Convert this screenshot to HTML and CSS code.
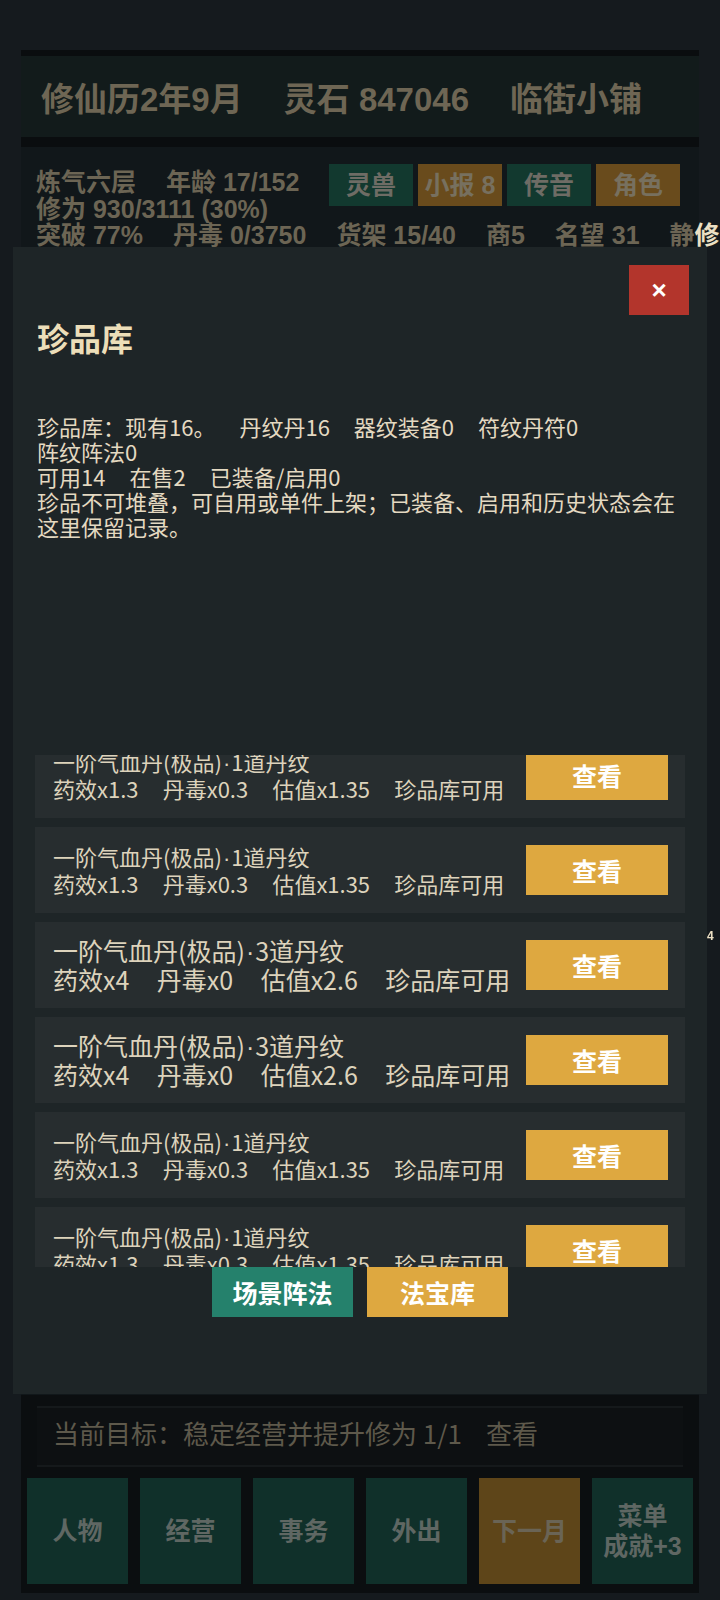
FILE: index.html
```html
<!DOCTYPE html>
<html lang="zh">
<head>
<meta charset="utf-8">
<title>珍品库</title>
<link rel="stylesheet" href="styles.css">
</head>
<body>
<div class="app">
  <header class="topbar">
    <span>修仙历2年9月</span>
    <span>灵石 847046</span>
    <span>临街小铺</span>
  </header>
  <section class="stats">
    <div class="stats-top">
      <div class="stats-lines">
        <div class="row"><span class="it">炼气六层</span><span>年龄 17/152</span></div>
        <div class="row">修为 930/3111 (30%)</div>
      </div>
      <div class="tabs">
        <button class="tab teal">灵兽</button>
        <button class="tab brown">小报 8</button>
        <button class="tab teal">传音</button>
        <button class="tab brown">角色</button>
      </div>
    </div>
    <div class="row nowrap"><span class="it">突破 77%</span><span class="it">丹毒 0/3750</span><span class="it">货架 15/40</span><span class="it">商5</span><span class="it">名望 31</span><span>静<span class="bright">修</span></span></div>
  </section>
  <footer class="bottom">
    <div class="goal"><span>当前目标：稳定经营并提升修为 1/1</span><span class="goal-link">查看</span></div>
    <nav class="nav">
      <button class="navbtn teal">人物</button>
      <button class="navbtn teal">经营</button>
      <button class="navbtn teal">事务</button>
      <button class="navbtn teal">外出</button>
      <button class="navbtn brown">下一月</button>
      <button class="navbtn teal">菜单<br>成就+3</button>
    </nav>
  </footer>
</div>

<div class="overlay">
  <div class="modal">
    <div class="modal-head"><button class="close">×</button></div>
    <h2 class="title">珍品库</h2>
    <div class="info">
      <div><span class="it">珍品库：现有16。</span><span class="it">丹纹丹16</span><span class="it">器纹装备0</span><span class="it">符纹丹符0</span><span class="it">阵纹阵法0</span></div>
      <div><span class="it">可用14</span><span class="it">在售2</span><span>已装备/启用0</span></div>
      <div>珍品不可堆叠，可自用或单件上架；已装备、启用和历史状态会在这里保留记录。</div>
    </div>
    <div class="list">
      <div class="list-inner">
        <div class="card">
          <div class="card-text"><div>一阶气血丹(极品)<span class="dot">·</span>1道丹纹</div><div><span class="it">药效x1.3</span><span class="it">丹毒x0.3</span><span class="it">估值x1.35</span><span>珍品库可用</span></div></div>
          <button class="view">查看</button>
        </div>
        <div class="card">
          <div class="card-text"><div>一阶气血丹(极品)<span class="dot">·</span>1道丹纹</div><div><span class="it">药效x1.3</span><span class="it">丹毒x0.3</span><span class="it">估值x1.35</span><span>珍品库可用</span></div></div>
          <button class="view">查看</button>
        </div>
        <div class="card">
          <div class="card-text lg"><div>一阶气血丹(极品)<span class="dot">·</span>3道丹纹</div><div><span class="it">药效x4</span><span class="it">丹毒x0</span><span class="it">估值x2.6</span><span>珍品库可用</span></div></div>
          <button class="view">查看</button>
        </div>
        <div class="card">
          <div class="card-text lg"><div>一阶气血丹(极品)<span class="dot">·</span>3道丹纹</div><div><span class="it">药效x4</span><span class="it">丹毒x0</span><span class="it">估值x2.6</span><span>珍品库可用</span></div></div>
          <button class="view">查看</button>
        </div>
        <div class="card">
          <div class="card-text"><div>一阶气血丹(极品)<span class="dot">·</span>1道丹纹</div><div><span class="it">药效x1.3</span><span class="it">丹毒x0.3</span><span class="it">估值x1.35</span><span>珍品库可用</span></div></div>
          <button class="view">查看</button>
        </div>
        <div class="card">
          <div class="card-text"><div>一阶气血丹(极品)<span class="dot">·</span>1道丹纹</div><div><span class="it">药效x1.3</span><span class="it">丹毒x0.3</span><span class="it">估值x1.35</span><span>珍品库可用</span></div></div>
          <button class="view">查看</button>
        </div>
        <div class="card">
          <div class="card-text"><div>一阶气血丹(极品)<span class="dot">·</span>1道丹纹</div><div><span class="it">药效x1.3</span><span class="it">丹毒x0.3</span><span class="it">估值x1.35</span><span>珍品库可用</span></div></div>
          <button class="view">查看</button>
        </div>
      </div>
    </div>
    <div class="actions">
      <button class="act teal">场景阵法</button>
      <button class="act gold">法宝库</button>
    </div>
  </div>
</div>
<span class="stray">4</span>
</body>
</html>
```
FILE: styles.css
```css
html {
  overflow: hidden;
}
body {
  margin: 0;
  width: 720px;
  height: 1600px;
  background: #151a1e;
  font-family: "Liberation Sans", "Noto Sans CJK SC", sans-serif;
}
button {
  border: 0;
  padding: 0;
  margin: 0;
  font: inherit;
  cursor: pointer;
}
.app {
  height: 1600px;
  box-sizing: border-box;
  padding: 50px 21px 7px;
  display: flex;
  flex-direction: column;
}
.topbar {
  height: 81px;
  border-top: 6px solid #0a0d0f;
  border-bottom: 10px solid #0a0d0f;
  background: #121b1b;
  display: flex;
  align-items: center;
  gap: 41px;
  padding-left: 20px;
  font-size: 33px;
  font-weight: bold;
  color: #6e6654;
  white-space: nowrap;
}
.stats {
  flex: 1;
  background: #11171a;
  padding: 17px 0 0 15px;
  font-size: 25px;
  font-weight: bold;
  line-height: 26.5px;
  color: #6c6554;
}
.stats-top {
  display: flex;
}
.stats-lines {
  width: 293px;
  margin-top: 5px;
}
.row .it {
  margin-right: 30px;
}
.nowrap {
  white-space: nowrap;
}
.bright {
  color: #ece0c4;
}
.tabs {
  display: flex;
  gap: 5px;
}
.tab {
  width: 84px;
  height: 42px;
  display: flex;
  align-items: center;
  justify-content: center;
  font-size: 25px;
  font-weight: bold;
  color: #6e6c65;
}
.tab.teal {
  background: #12392f;
}
.tab.brown {
  background: #694b1c;
  color: #77705f;
}
.bottom {
  height: 198px;
  box-sizing: border-box;
  background: #0b0e10;
  padding: 11px 6px 9px;
}
.goal {
  height: 61px;
  margin: 0 10px;
  padding: 0 0 8px 16px;
  box-sizing: border-box;
  display: flex;
  align-items: center;
  background: #0d1012;
  box-shadow: inset 0 2px #15191b, inset 0 -2px #15191b;
  font-family: "Noto Sans CJK SC", sans-serif;
  font-size: 26px;
  color: #5e594b;
  white-space: nowrap;
}
.goal-link {
  margin-left: 24px;
}
.nav {
  display: flex;
  gap: 12px;
  margin-top: 11px;
}
.navbtn {
  width: 101px;
  height: 106px;
  display: flex;
  align-items: center;
  justify-content: center;
  text-align: center;
  font-size: 25px;
  font-weight: bold;
  line-height: 30px;
  color: #5f6763;
}
.navbtn.teal {
  background: #10302a;
}
.navbtn.brown {
  background: #5e4519;
  color: #6a6455;
}
.overlay {
  position: fixed;
  inset: 0;
}
.modal {
  position: absolute;
  left: 13px;
  top: 247px;
  width: 694px;
  height: 1147px;
  box-sizing: border-box;
  padding: 18px 22px 0;
  background: #1e2527;
  display: flex;
  flex-direction: column;
  font-family: "Noto Sans CJK SC", sans-serif;
}
.modal-head {
  display: flex;
  justify-content: flex-end;
  margin-right: -4px;
}
.close {
  width: 60px;
  height: 50px;
  background: #b3352c;
  color: #ffffff;
  font-family: "Liberation Sans", sans-serif;
  font-size: 26px;
  font-weight: bold;
  display: flex;
  align-items: center;
  justify-content: center;
}
.title {
  margin: 3px 0 0;
  padding-left: 2px;
  font-size: 32px;
  line-height: 38px;
  font-weight: bold;
  color: #ecdeb9;
}
.info {
  margin-top: 58px;
  padding-left: 2px;
  font-size: 22px;
  line-height: 25px;
  color: #e4d9c1;
}
.info .it {
  display: inline-block;
  white-space: nowrap;
  margin-right: 24px;
}
.list {
  margin-top: 216px;
  height: 512px;
  overflow: hidden;
}
.list-inner {
  margin-top: -23px;
}
.card {
  height: 86px;
  margin-bottom: 9px;
  box-sizing: border-box;
  padding: 0 17px 0 18px;
  background: #272d2f;
  display: flex;
  align-items: center;
  justify-content: space-between;
}
.card-text {
  font-size: 22px;
  line-height: 25px;
  color: #ddd3bc;
  white-space: nowrap;
}
.card-text.lg {
  font-size: 25px;
  line-height: 27px;
}
.card-text .it {
  margin-right: 1.1em;
}
.dot {
  font-family: "Liberation Sans", sans-serif;
  margin: 0 1px;
}
.view {
  width: 142px;
  height: 50px;
  background: #dea840;
  color: #ffffff;
  font-size: 25px;
  font-weight: bold;
  display: flex;
  align-items: center;
  justify-content: center;
}
.actions {
  display: flex;
  justify-content: center;
  gap: 14px;
}
.act {
  width: 141px;
  height: 50px;
  color: #ffffff;
  font-size: 25px;
  font-weight: bold;
  display: flex;
  align-items: center;
  justify-content: center;
}
.act.teal {
  background: #25816c;
}
.act.gold {
  background: #dea840;
}
.stray {
  position: absolute;
  left: 707px;
  top: 929px;
  font-family: "Liberation Sans", sans-serif;
  font-size: 12px;
  font-weight: bold;
  color: #ece0c4;
}
```
